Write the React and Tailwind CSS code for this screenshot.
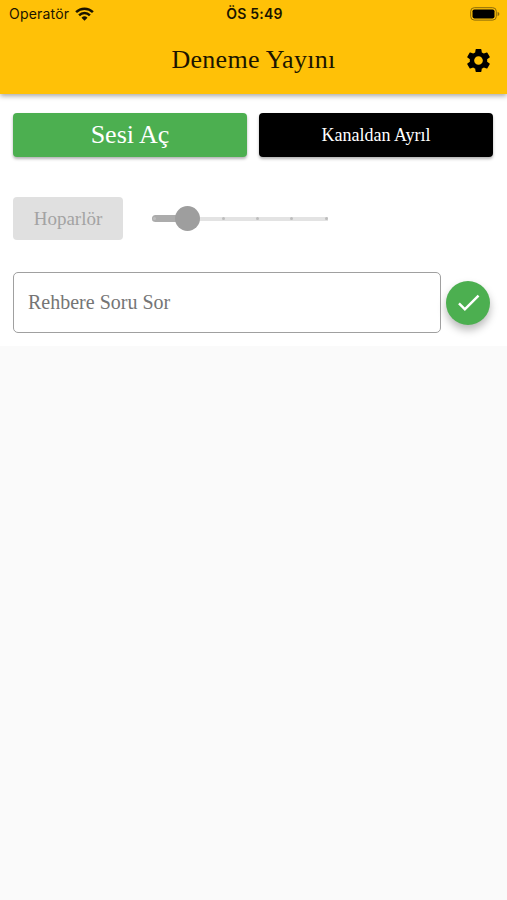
import { useState } from "react";
import { MdCheck, MdSettings } from "react-icons/md";

const TICKS = [0, 1, 2, 3, 4, 5];

function WifiIcon() {
  return (
    <svg width="19" height="14" viewBox="0 0 19 14" fill="none" stroke="#1a1400" strokeWidth="2.5">
      <path d="M1.1 5.1a12 12 0 0 1 16.8 0" />
      <path d="M4.1 8.3a7.7 7.7 0 0 1 10.8 0" />
      <path d="M9.5 13.7 6.5 10.7a4.3 4.3 0 0 1 6 0z" fill="#1a1400" stroke="none" />
    </svg>
  );
}

function BatteryIcon() {
  return (
    <svg width="30" height="14" viewBox="0 0 30 14" fill="none">
      <rect x="0.7" y="0.7" width="25.6" height="12.4" rx="3.6" stroke="#8a6a0b" strokeWidth="1" />
      <rect x="2.5" y="2.4" width="22" height="9" rx="1.8" fill="#000" />
      <path d="M27.6 4.8q1.8.7 1.8 2.2t-1.8 2.2z" fill="#8a6a0b" />
    </svg>
  );
}

function StatusBar() {
  return (
    <div className="grid grid-cols-3 items-center h-7 pl-[9px] pr-[7px] font-['Inter','Liberation_Sans',sans-serif] text-[#1a1400]">
      <div className="flex items-center gap-[6px]">
        <span className="text-[14px] leading-none tracking-[0.2px]">Operatör</span>
        <WifiIcon />
      </div>
      <span className="text-center text-[14px] leading-none font-semibold tracking-[0.2px]">ÖS 5:49</span>
      <div className="flex justify-end">
        <BatteryIcon />
      </div>
    </div>
  );
}

function VolumeSlider({ value }) {
  return (
    <div className="relative w-[176px] h-[25px] flex items-center">
      <div className="w-full h-1 bg-[#e3e3e3]" />
      <div
        className="absolute left-0 h-[7px] rounded-full bg-[#acacac]"
        style={{ width: 4 + value * 34.3 }}
      />
      {TICKS.map((t) => (
        <span
          key={t}
          className="absolute size-[3px] rounded-full bg-[#bdbdbd]"
          style={{ left: 1 + t * 34.3 }}
        />
      ))}
      <div
        className="absolute size-[25px] rounded-full bg-[#9e9e9e]"
        style={{ left: value * 34.3 - 11.5 }}
      />
    </div>
  );
}

export default function App() {
  const [question, setQuestion] = useState("");

  return (
    <div className="min-h-screen bg-[#fafafa] font-['Liberation_Serif',serif]">
      <header className="relative h-[94px] bg-[#ffc107] shadow-[0_2px_5px_rgba(0,0,0,0.35)]">
        <StatusBar />
        <div className="grid grid-cols-[48px_1fr_48px] items-center h-[64px]">
          <span />
          <h1 className="text-center text-[26px] leading-none tracking-[0.3px] text-[#1c1500]">Deneme Yayını</h1>
          <button className="justify-self-center mr-[10px]" aria-label="Ayarlar">
            <MdSettings size={29} />
          </button>
        </div>
      </header>

      <main className="h-[252px] bg-white px-[13px] pt-[19px]">
        <div className="grid grid-cols-2 gap-3 pr-px">
          <button className="h-11 rounded-[4px] bg-[#4caf50] text-[26px] leading-none text-white shadow-[0_2px_3px_rgba(0,0,0,0.3)]">
            Sesi Aç
          </button>
          <button className="h-11 rounded-[4px] bg-black text-[18px] leading-none text-white shadow-[0_2px_3px_rgba(0,0,0,0.3)]">
            Kanaldan Ayrıl
          </button>
        </div>

        <div className="flex items-center mt-10 gap-[29px]">
          <button disabled className="w-[110px] h-[43px] rounded-[4px] bg-[#e0e0e0] text-[19px] leading-none text-[#a3a3a3]">
            Hoparlör
          </button>
          <VolumeSlider value={1} />
        </div>

        <div className="flex items-center mt-8 gap-[5px]">
          <input
            type="text"
            value={question}
            onChange={(e) => setQuestion(e.target.value)}
            placeholder="Rehbere Soru Sor"
            className="w-[428px] h-[61px] rounded-[5px] border border-[#a0a0a0] px-[14px] text-[20px] text-black placeholder:text-[#757575] outline-none"
          />
          <button
            aria-label="Gönder"
            className="flex items-center justify-center size-11 rounded-full bg-[#4caf50] text-white shadow-[0_5px_8px_rgba(0,0,0,0.28)]"
          >
            <MdCheck size={29} />
          </button>
        </div>
      </main>
    </div>
  );
}
